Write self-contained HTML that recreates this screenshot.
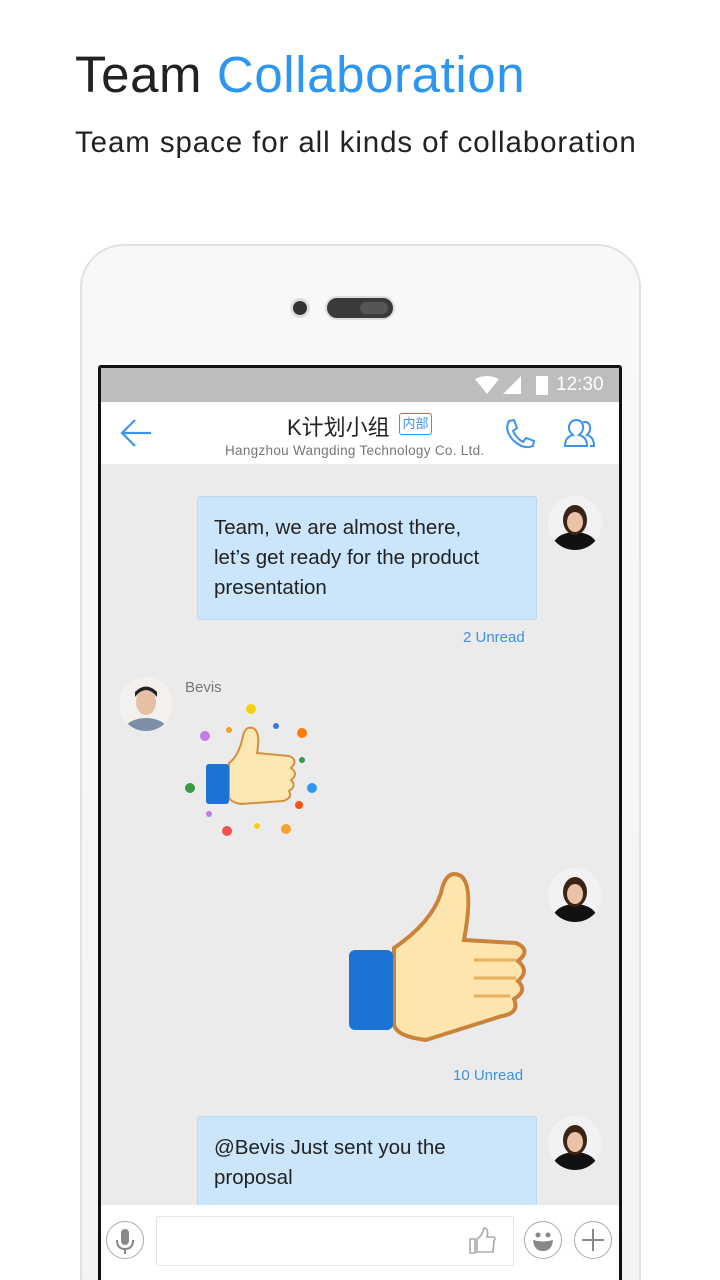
<!DOCTYPE html>
<html><head><meta charset="utf-8"><style>
*{margin:0;padding:0;box-sizing:border-box}
html,body{width:720px;height:1280px;overflow:hidden}
body{background:#fff;font-family:"Liberation Sans","Noto Sans CJK SC",sans-serif;position:relative}
.abs{position:absolute}
h1{position:absolute;left:75px;top:45px;font-size:51px;font-weight:400;color:#222;letter-spacing:0.6px}
h1 span{color:#2d96f3}
.sub{left:75px;top:126px;font-size:29.5px;color:#222;letter-spacing:0.9px}
.phone{left:80px;top:244px;width:561px;height:1100px;border:2px solid #e2e2e2;border-radius:44px;background:linear-gradient(#f8f8f8,#f3f3f3)}
.screen{left:98px;top:365px;width:524px;height:930px;background:#111;border-radius:3px}
.inner{left:101px;top:368px;width:518px;height:912px;background:#ebebeb;overflow:hidden}
.status{left:0;top:0;width:518px;height:34px;background:#bdbdbd;color:#fff;font-size:19px}
.hdr{left:0;top:34px;width:518px;height:62px;background:#fff}
.bubble{background:#cbe6fb;border:1px solid #b9d8f0;border-radius:3px;font-size:20.5px;color:#222;line-height:30px;padding:16px 16px}
.av{width:54px;height:54px;border-radius:50%;overflow:hidden;background:#f2f2f2}
.unread{font-size:15px;color:#3d93e6}
</style></head><body>
<h1>Team <span>Collaboration</span></h1>
<div class="abs sub">Team space for all kinds of collaboration</div>
<div class="abs phone"></div>
<div class="abs" style="left:290px;top:298px;width:20px;height:20px;border-radius:50%;background:#333;border:3px solid #ddd"></div>
<div class="abs" style="left:325px;top:296px;width:70px;height:24px;border-radius:12px;background:#3a3a3a;border:2px solid #ddd"></div>
<div class="abs" style="left:360px;top:302px;width:28px;height:12px;border-radius:6px;background:#555"></div>
<div class="abs screen"></div>
<div class="abs inner">
  <div class="abs status">
    <svg class="abs" style="left:372px;top:8px" width="80" height="20"><path d="M2 3 Q14 -3 26 3 L14 18Z" fill="#fff"/><path d="M30 18 L48 18 L48 0Z" fill="#fff"/><rect x="63" y="0" width="12" height="19" fill="#fff"/></svg>
    <div class="abs" style="left:455px;top:6px">12:30</div>
  </div>
  <div class="abs hdr">
    <svg class="abs" style="left:18px;top:16px" width="34" height="30"><path d="M32 15H3M16 2L3 15L16 28" stroke="#3b94ec" stroke-width="2.2" fill="none"/></svg>
    <div class="abs" style="left:186px;top:8px;font-size:22px;color:#222">K计划小组</div>
    <div class="abs" style="left:298px;top:11px;width:33px;height:22px;border:1.5px solid #3b94ec;border-radius:3px;color:#3b94ec;font-size:13px;text-align:center;line-height:19px">内部</div>
    <div class="abs" style="left:124px;top:41px;font-size:13.5px;color:#777;letter-spacing:0.3px">Hangzhou Wangding Technology Co. Ltd.</div>
    <svg class="abs" style="left:402px;top:16px" width="34" height="32"><path d="M6 3 L11 2 L14 10 L10 13 Q13 20 20 24 L23 20 L31 23 L30 28 Q20 32 10 22 Q1 12 6 3Z" stroke="#3b94ec" stroke-width="2" fill="none"/></svg>
    <svg class="abs" style="left:461px;top:16px" width="38" height="32"><path d="M3 28 Q3 19 11 17 Q6 13 7 8 Q9 2 14 2 Q20 2 21 8 Q22 13 17 17 Q25 19 25 28Z" stroke="#3b94ec" stroke-width="2" fill="none"/><path d="M21 4 Q27 3 28 9 Q29 13 25 17 Q32 19 32 28 L28 28" stroke="#3b94ec" stroke-width="2" fill="none"/></svg>
  </div>
  <div class="abs bubble" style="left:96px;top:128px;width:340px;height:124px;padding-right:40px">Team, we are almost there, let’s get ready for the product presentation</div>
  <div class="abs av" style="left:447px;top:128px"><svg width="54" height="54"><ellipse cx="27" cy="50" rx="22" ry="14" fill="#111"/><ellipse cx="27" cy="24" rx="12" ry="15" fill="#3a2418"/><ellipse cx="27" cy="26" rx="8" ry="10" fill="#e9c2a8"/></svg></div>
  <div class="abs unread" style="left:362px;top:261px">2 Unread</div>
  <div class="abs av" style="left:18px;top:309px"><svg width="54" height="54"><rect width="54" height="54" fill="#f3f0ee"/><ellipse cx="27" cy="54" rx="22" ry="13" fill="#7c8fa5"/><ellipse cx="27" cy="25" rx="10" ry="13" fill="#e6bfa4"/><path d="M16 20 Q27 6 38 20 L38 15 Q27 4 16 15Z" fill="#222"/></svg></div>
  <div class="abs" style="left:84px;top:311px;font-size:15px;color:#777">Bevis</div>
  <svg class="abs" style="left:80px;top:330px" width="140" height="140">
    <circle cx="70" cy="11" r="5" fill="#f5d00f"/><circle cx="24" cy="38" r="5" fill="#c07ce8"/><circle cx="95" cy="28" r="3" fill="#2d7ce0"/><circle cx="121" cy="35" r="5" fill="#ff7a00"/><circle cx="48" cy="32" r="3" fill="#f0a030"/><circle cx="121" cy="62" r="3" fill="#3a9a40"/><circle cx="9" cy="90" r="5" fill="#3a9a40"/><circle cx="131" cy="90" r="5" fill="#2d96f3"/><circle cx="118" cy="107" r="4" fill="#ff5010"/><circle cx="28" cy="116" r="3" fill="#c07ce8"/><circle cx="46" cy="133" r="5" fill="#f05050"/><circle cx="76" cy="128" r="3" fill="#f5d00f"/><circle cx="105" cy="131" r="5" fill="#f8a030"/>
    <path d="M48 65 Q58 58 62 38 Q64 28 72 30 Q80 34 76 55 L108 58 Q118 62 110 70 Q118 76 110 82 Q116 88 108 93 Q112 100 102 103 L60 106 Q48 104 48 98Z" fill="#fde7b2" stroke="#d49040" stroke-width="2"/>
    <rect x="25" y="66" width="23" height="40" rx="3" fill="#1b74d4"/>
  </svg>
  <div class="abs av" style="left:447px;top:500px"><svg width="54" height="54"><ellipse cx="27" cy="50" rx="22" ry="14" fill="#111"/><ellipse cx="27" cy="24" rx="12" ry="15" fill="#3a2418"/><ellipse cx="27" cy="26" rx="8" ry="10" fill="#e9c2a8"/></svg></div>
  <svg class="abs" style="left:245px;top:500px" width="190" height="180">
    <path d="M48 80 Q85 55 95 25 Q100 0 115 8 Q128 18 118 72 L170 75 Q186 82 172 93 Q184 103 172 113 Q182 123 168 131 Q174 145 156 148 L80 172 Q48 168 48 155Z" fill="#fde5ad" stroke="#c9833a" stroke-width="4"/>
    <path d="M128 92H170M128 110H170M128 128H164" stroke="#e8b060" stroke-width="3"/>
    <rect x="3" y="82" width="44" height="80" rx="6" fill="#1b74d4"/>
  </svg>
  <div class="abs unread" style="left:352px;top:699px">10 Unread</div>
  <div class="abs bubble" style="left:96px;top:748px;width:340px;height:124px;padding-right:40px">@Bevis Just sent you the proposal</div>
  <div class="abs av" style="left:447px;top:748px"><svg width="54" height="54"><ellipse cx="27" cy="50" rx="22" ry="14" fill="#111"/><ellipse cx="27" cy="24" rx="12" ry="15" fill="#3a2418"/><ellipse cx="27" cy="26" rx="8" ry="10" fill="#e9c2a8"/></svg></div>
  <div class="abs" style="left:0;top:837px;width:518px;height:80px;background:#fff"></div>
  <div class="abs" style="left:5px;top:853px;width:38px;height:38px;border:1.5px solid #aaa;border-radius:50%"></div>
  <svg class="abs" style="left:5px;top:853px" width="38" height="38"><rect x="15" y="8" width="8" height="16" rx="4" fill="#888"/><path d="M11 19 Q11 28 19 28 Q27 28 27 19M19 28V33" stroke="#888" stroke-width="2" fill="none"/></svg>
  <div class="abs" style="left:55px;top:848px;width:358px;height:50px;border:1px solid #e6e6e6;border-radius:2px"></div>
  <svg class="abs" style="left:367px;top:858px" width="30" height="30"><path d="M2 13h5v14H2zM9 13 Q15 9 16 2 Q21 2 19 11 L26 11 Q28 13 26 15 L25 26 L9 26Z" stroke="#aaa" stroke-width="1.6" fill="none"/></svg>
  <div class="abs" style="left:423px;top:853px;width:38px;height:38px;border:1.5px solid #aaa;border-radius:50%"></div>
  <svg class="abs" style="left:423px;top:853px" width="38" height="38"><circle cx="14" cy="14" r="2.5" fill="#888"/><circle cx="24" cy="14" r="2.5" fill="#888"/><path d="M9 19 Q19 22 29 19 Q28 30 19 30 Q10 30 9 19Z" fill="#888"/></svg>
  <div class="abs" style="left:473px;top:853px;width:38px;height:38px;border:1.5px solid #aaa;border-radius:50%"></div>
  <svg class="abs" style="left:473px;top:853px" width="38" height="38"><path d="M19 8V30M8 19H30" stroke="#888" stroke-width="2"/></svg>
</div>
</body></html>
